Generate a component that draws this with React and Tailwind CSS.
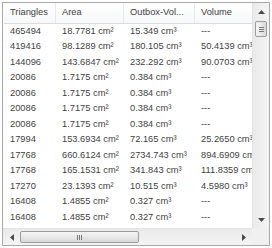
import React from "react";

const cols = [
  { label: "Triangles", w: "w-[52px]" },
  { label: "Area", w: "w-[68px]" },
  { label: "Outbox-Vol...", w: "w-[71px]" },
  { label: "Volume", w: "w-[120px]" },
];

const rows = [
  ["465494", "18.7781 cm²", "15.349 cm³", "---"],
  ["419416", "98.1289 cm²", "180.105 cm³", "50.4139 cm³"],
  ["144096", "143.6847 cm²", "232.292 cm³", "90.0703 cm³"],
  ["20086", "1.7175 cm²", "0.384 cm³", "---"],
  ["20086", "1.7175 cm²", "0.384 cm³", "---"],
  ["20086", "1.7175 cm²", "0.384 cm³", "---"],
  ["20086", "1.7175 cm²", "0.384 cm³", "---"],
  ["17994", "153.6934 cm²", "72.165 cm³", "25.2650 cm³"],
  ["17768", "660.6124 cm²", "2734.743 cm³", "894.6909 cm³"],
  ["17768", "165.1531 cm²", "341.843 cm³", "111.8359 cm³"],
  ["17270", "23.1393 cm²", "10.515 cm³", "4.5980 cm³"],
  ["16408", "1.4855 cm²", "0.327 cm³", "---"],
  ["16408", "1.4855 cm²", "0.327 cm³", "---"],
];

// small scrollbar arrow glyphs
const Arrow = ({ dir }) => {
  const pts = {
    up: "0,4 3.5,0 7,4",
    down: "0,0 3.5,4 7,0",
    left: "4,0 0,3.5 4,7",
    right: "0,0 4,3.5 0,7",
  }[dir];
  const vert = dir === "up" || dir === "down";
  return (
    <svg width={vert ? 7 : 4} height={vert ? 4 : 7} viewBox={vert ? "0 0 7 4" : "0 0 4 7"}>
      <polygon points={pts} fill="#4a4a4a" />
    </svg>
  );
};

export default function App() {
  return (
    <div className="w-[272px] h-[248px] bg-white p-[2px] font-['Liberation_Sans',Arial,sans-serif] text-[9.3px] text-[#3f3f3f]">
      <div className="w-[268px] h-[244px] border border-[#a9a9a9] grid grid-cols-[1fr_17px] grid-rows-[1fr_17px] bg-white">
        {/* list content */}
        <div className="overflow-hidden pl-[1px]">
          <div className="flex h-[21px] border-b border-[#dcdcdc] bg-gradient-to-b from-white to-[#f7f8f9] w-max">
            {cols.map((c) => (
              <div
                key={c.label}
                className={`${c.w} shrink-0 pl-[6px] flex items-center border-r border-[#e6e9ed] whitespace-nowrap overflow-hidden`}
              >
                {c.label}
              </div>
            ))}
          </div>
          {rows.map((r, i) => (
            <div key={i} className="flex h-[15.5px] items-center w-max">
              {r.map((v, j) => (
                <div key={j} className={`${cols[j].w} shrink-0 pl-[6px] whitespace-nowrap`}>
                  {v}
                </div>
              ))}
            </div>
          ))}
        </div>

        {/* vertical scrollbar */}
        <div className="flex flex-col bg-gradient-to-r from-[#eaeaea] to-[#f4f4f4] border-l border-[#e4e4e4]">
          <div className="h-[17px] flex items-center justify-center">
            <Arrow dir="up" />
          </div>
          <div className="flex-1 px-[2px] pt-[1px]">
            <div className="h-[16px] rounded-[2px] border border-[#9c9c9c] bg-gradient-to-r from-[#f5f5f5] to-[#dadada] flex flex-col items-center justify-center gap-[1px]">
              <div className="w-[5px] h-px bg-[#7a7a7a]" />
              <div className="w-[5px] h-px bg-[#7a7a7a]" />
              <div className="w-[5px] h-px bg-[#7a7a7a]" />
            </div>
          </div>
          <div className="h-[17px] flex items-center justify-center">
            <Arrow dir="down" />
          </div>
        </div>

        {/* horizontal scrollbar */}
        <div className="flex bg-gradient-to-b from-[#eaeaea] to-[#f4f4f4] border-t border-[#e4e4e4]">
          <div className="w-[17px] flex items-center justify-center">
            <Arrow dir="left" />
          </div>
          <div className="flex-1 py-[2px]">
            <div className="w-[119px] h-full rounded-[2px] border border-[#9c9c9c] bg-gradient-to-b from-[#f5f5f5] to-[#dadada] flex items-center justify-center gap-[1px]">
              <div className="h-[5px] w-px bg-[#7a7a7a]" />
              <div className="h-[5px] w-px bg-[#7a7a7a]" />
              <div className="h-[5px] w-px bg-[#7a7a7a]" />
            </div>
          </div>
          <div className="w-[17px] flex items-center justify-center">
            <Arrow dir="right" />
          </div>
        </div>

        {/* corner */}
        <div className="bg-[#f0f0f0]" />
      </div>
    </div>
  );
}
